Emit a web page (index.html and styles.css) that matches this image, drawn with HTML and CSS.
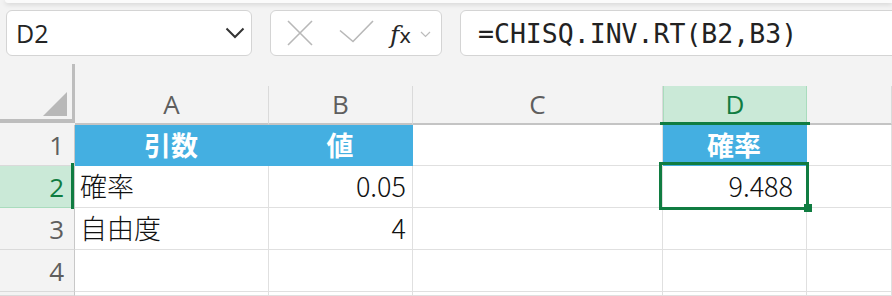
FILE: index.html
```html
<!DOCTYPE html>
<html lang="ja">
<head>
    <meta charset="UTF-8">
    <title>CHISQ.INV.RT</title>
    <link rel="stylesheet" href="styles.css">
</head>
<body>
    <div class="ribbon-edge"></div>

    <div class="formula-bar">
        <div class="name-box">
            <span>D2</span>
            <svg class="chevron" width="20" height="12" viewBox="0 0 20 12">
                <path d="M1.5 1.5 L10 10 L18.5 1.5" fill="none" stroke="#333" stroke-width="2"/>
            </svg>
        </div>
        <div class="fx-box">
            <svg width="26" height="26" viewBox="0 0 26 26">
                <path d="M1 1 L25 25 M25 1 L1 25" stroke="#b8b8b8" stroke-width="1.6" fill="none"/>
            </svg>
            <svg width="36" height="24" viewBox="0 0 36 24">
                <path d="M1 10.5 L14 21.5 L34 1" stroke="#b8b8b8" stroke-width="1.6" fill="none"/>
            </svg>
            <span class="fx"><i>f</i><i class="x">x</i></span>
            <svg class="small-chevron" width="11" height="7" viewBox="0 0 11 7">
                <path d="M1 1 L5.5 5.5 L10 1" stroke="#bcbcbc" stroke-width="1.2" fill="none"/>
            </svg>
        </div>
        <div class="formula-input">=CHISQ.INV.RT(B2,B3)</div>
    </div>

    <div class="sheet">
        <div class="corner"><span class="corner-mark"></span></div>
        <div class="col-head">A</div>
        <div class="col-head">B</div>
        <div class="col-head">C</div>
        <div class="col-head active">D</div>
        <div class="col-head"></div>

        <div class="row-head">1</div>
        <div class="cell title">引数</div>
        <div class="cell title">値</div>
        <div class="cell"></div>
        <div class="cell title">確率</div>
        <div class="cell"></div>

        <div class="row-head active">2</div>
        <div class="cell">確率</div>
        <div class="cell num">0.05</div>
        <div class="cell"></div>
        <div class="cell num selected">9.488</div>
        <div class="cell"></div>

        <div class="row-head">3</div>
        <div class="cell">自由度</div>
        <div class="cell num">4</div>
        <div class="cell"></div>
        <div class="cell"></div>
        <div class="cell"></div>

        <div class="row-head">4</div>
        <div class="cell"></div>
        <div class="cell"></div>
        <div class="cell"></div>
        <div class="cell"></div>
        <div class="cell"></div>

        <div class="row-head"></div>
        <div class="cell"></div>
        <div class="cell"></div>
        <div class="cell"></div>
        <div class="cell"></div>
        <div class="cell"></div>
    </div>
</body>
</html>
```

FILE: styles.css
```css
body {
    margin: 0;
    width: 892px;
    height: 296px;
    overflow: hidden;
    background: #f3f3f3;
    font-family: "Noto Sans CJK JP", sans-serif;
    color: #1f1f1f;
}

/* white ribbon bottom edge at the very top */
.ribbon-edge {
    height: 3px;
    margin-left: 5px;
    background: #fbfbfb;
    border-bottom-left-radius: 6px;
    box-shadow: 0 1px 5px rgba(0, 0, 0, 0.18);
}

.formula-bar {
    display: flex;
    gap: 18px;
    padding: 7px 0 0 6px;
    height: 46px;
}

.name-box,
.fx-box,
.formula-input {
    box-sizing: border-box;
    height: 46px;
    background: #fff;
    border: 1px solid #d4d4d4;
    border-radius: 6px;
}

.name-box {
    width: 246px;
    display: flex;
    align-items: center;
    justify-content: space-between;
    padding: 0 6px 0 9px;
    font-family: "Open Sans", sans-serif;
    font-size: 25px;
    color: #242424;
}

.fx-box {
    width: 172px;
    display: flex;
    align-items: center;
    padding: 0 0 0 16px;
}

.fx-box svg:nth-child(2) {
    margin-left: 26px;
    margin-top: -2px;
}

.fx {
    margin-left: 15px;
    font-family: "DejaVu Serif", serif;
    font-size: 25px;
    color: #262626;
    line-height: 1;
    margin-top: 2px;
}

.fx .x {
    font-family: "DejaVu Sans", sans-serif;
    font-style: normal;
    font-size: 20px;
    margin-left: 0;
}

.small-chevron {
    margin-left: 9px;
    margin-top: 2px;
}

.formula-input {
    flex: 1;
    margin-right: -20px;
    padding-left: 17px;
    display: flex;
    align-items: center;
    font-family: "DejaVu Sans Mono", monospace;
    font-size: 26.5px;
    color: #222;
}

.sheet {
    margin-top: 8px;
    display: grid;
    grid-template-columns: 75px 194px 144px 250px 144px 1fr;
    grid-template-rows: 61px 41px 42px 42px 42px 4px;
}

.corner {
    box-sizing: border-box;
    height: 59px;
    border-right: 3px solid #bdbdbd;
    border-bottom: 4px solid #bdbdbd;
    position: relative;
}

.corner-mark {
    position: absolute;
    right: 5px;
    bottom: 3px;
    width: 24px;
    height: 24px;
    background: #b8b8b8;
    clip-path: polygon(100% 0, 100% 100%, 0 100%);
}

.col-head {
    box-sizing: border-box;
    align-self: end;
    height: 39px;
    border-right: 1px solid #dadada;
    border-bottom: 2px solid #c4c4c4;
    display: flex;
    align-items: center;
    justify-content: center;
    padding-bottom: 2px;
    font-family: "Open Sans", sans-serif;
    font-size: 26px;
    color: #5e5e5e;
}

.col-head.active {
    position: relative;
    background: #cae9d7;
    border-right-color: #a9dcbd;
    border-left: 1px solid #a9dcbd;
    color: #107c41;
}

.col-head.active::after {
    content: "";
    position: absolute;
    left: -4px;
    right: -4px;
    bottom: -2px;
    height: 3px;
    background: #107c41;
}

.row-head {
    box-sizing: border-box;
    border-right: 1px solid #c8c8c8;
    border-bottom: 1px solid #dadada;
    display: flex;
    align-items: center;
    justify-content: flex-end;
    padding-right: 10px;
    font-family: "Open Sans", sans-serif;
    font-size: 26px;
    color: #5e5e5e;
}

.row-head.active {
    position: relative;
    background: #cae9d7;
    border-bottom-color: #a9dcbd;
    color: #107c41;
}

.row-head.active::after {
    content: "";
    position: absolute;
    top: -3px;
    bottom: -2px;
    right: 0;
    width: 3px;
    background: #107c41;
}

.cell {
    box-sizing: border-box;
    background: #fff;
    border-right: 1px solid #e0e0e0;
    border-bottom: 1px solid #e0e0e0;
    display: flex;
    align-items: center;
    padding: 0 6px 2px 5px;
    font-size: 27px;
    font-weight: 300;
    color: #111;
    white-space: nowrap;
}

.cell.title {
    background: #44afe1;
    border-color: #44afe1;
    justify-content: center;
    font-weight: 700;
    color: #fff;
}

.cell.num {
    justify-content: flex-end;
}

.cell.selected {
    position: relative;
    padding-right: 13px;
}

.cell.selected::after {
    content: "";
    position: absolute;
    top: -4px;
    left: -4px;
    right: -3px;
    bottom: -3px;
    border: 3px solid #107c41;
}

.cell.selected::before {
    content: "";
    position: absolute;
    right: -6px;
    bottom: -5px;
    width: 8px;
    height: 8px;
    background: #107c41;
    z-index: 1;
}
```
